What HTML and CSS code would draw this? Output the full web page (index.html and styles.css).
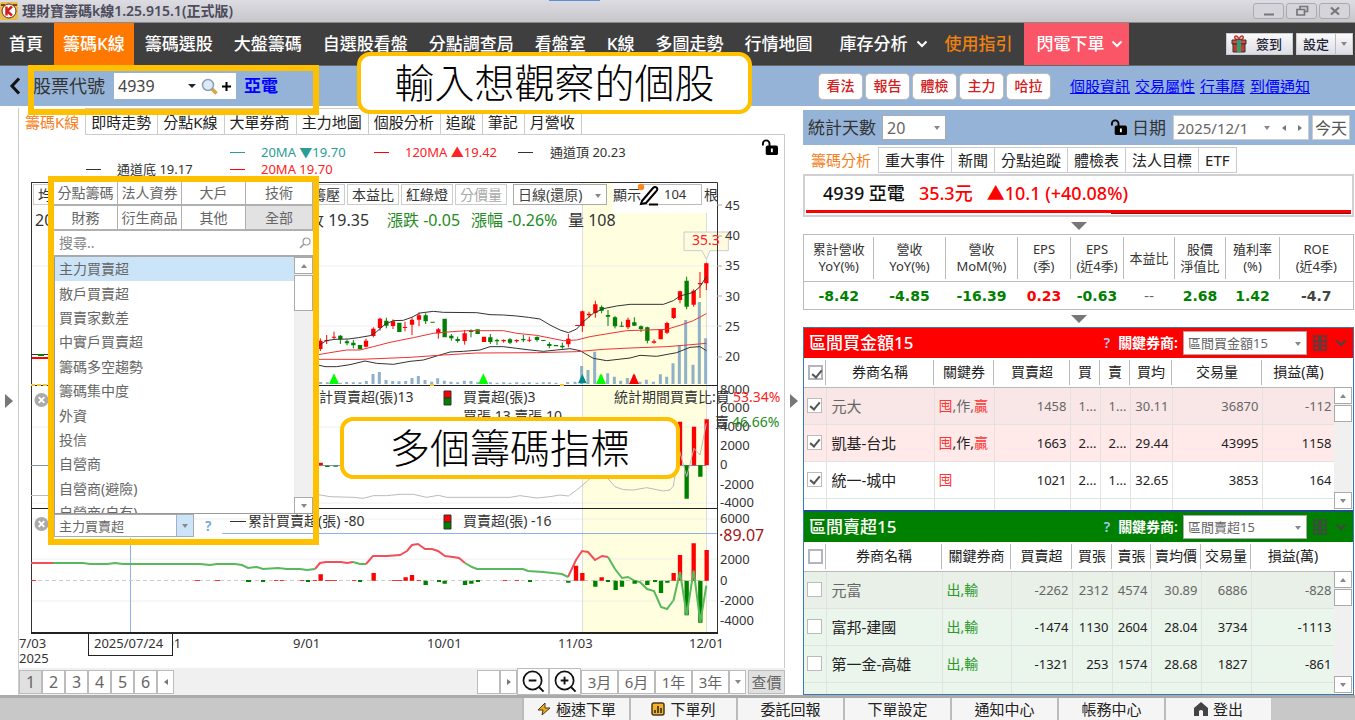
FILE: index.html
```html
<!DOCTYPE html>
<html lang="zh-Hant">
<head>
<meta charset="utf-8">
<meta name="viewport" content="width=device-width, initial-scale=1">
<title>理財寶籌碼k線</title>
<link rel="stylesheet" href="styles.css">
</head>
<body>
<svg class="defs" aria-hidden="true">
  <symbol id="lock" viewBox="0 0 18 18"><path d="M2 7V5a3.500 3.500 0 0 1 7 0v3" fill="none" stroke="#000" stroke-width="2"/><rect x="5" y="7" width="13" height="10" rx="2"/><path d="M11.500 10v4" stroke="#fff" stroke-width="2"/></symbol>
  <symbol id="chev" viewBox="0 0 12 8"><path d="M1.500 1.500 6 6l4.500-4.500" fill="none" stroke="currentColor" stroke-width="2"/></symbol>
  <symbol id="grid" viewBox="0 0 14 16"><path d="M1 1h5v14H1zM8 1h5v14H8zM1 6h5M1 10.500h5M8 6h5M8 10.500h5" fill="none" stroke="currentColor" stroke-width="1.500"/></symbol>
  <symbol id="close" viewBox="0 0 16 16"><circle cx="8" cy="8" r="7.500" fill="#aaa"/><path d="m5 5 6 6m0-6-6 6" stroke="#fff" stroke-width="2"/></symbol>
</svg>

<header class="titlebar">
  <svg class="app-icon" viewBox="0 0 18 18"><rect width="18" height="18" rx="2" fill="#e9bd4b"/><path d="M1 3h4M13 3h4" stroke="#7b4a14" stroke-width="2"/><circle cx="9" cy="9" r="7" fill="#fff" stroke="#6a2c12"/><path d="M6.500 4.500v9M12 4.500l-5 4.500 5 4.500" fill="none" stroke="#d21a1a" stroke-width="2.400"/></svg>
  <span class="title">理財寶籌碼k線1.25.915.1(正式版)</span>
  <span class="strip"></span>
  <div class="win-btns">
    <button aria-label="最小化"><svg viewBox="0 0 14 12"><path d="M2 9.500h10" stroke="#777" stroke-width="2"/></svg></button>
    <button aria-label="還原"><svg viewBox="0 0 14 12"><path d="M5 4V1.500h7.500v5H10M2 4.500h7.500v5.500H2z" fill="none" stroke="#777" stroke-width="1.700"/></svg></button>
    <button aria-label="關閉"><svg viewBox="0 0 14 12"><path d="m3 2.500 8 7m0-7-8 7" stroke="#777" stroke-width="2.200"/></svg></button>
  </div>
</header>

<nav class="nav">
  <a href="#">首頁</a><a href="#" class="active">籌碼K線</a><a href="#">籌碼選股</a><a href="#">大盤籌碼</a><a href="#">自選股看盤</a><a href="#">分點調查局</a><a href="#">看盤室</a><a href="#">K線</a><a href="#">多圖走勢</a><a href="#">行情地圖</a><a href="#" class="stock-menu">庫存分析<svg class="chev"><use href="#chev"/></svg></a><a href="#" class="guide">使用指引</a><a href="#" class="flash">閃電下單<svg class="chev"><use href="#chev"/></svg></a>
  <div class="nav-tools">
    <button class="tool"><svg class="gift" viewBox="0 0 16 18"><path d="M8 5C3 5 3 1 5 1s3 4 3 4 1-4 3-4 2 4-3 4" fill="none" stroke="#c33" stroke-width="1.600"/><path d="M1 5h14v4H1z" fill="#d84a3c" stroke="#333"/><path d="M2 9h12v8H2z" fill="#c43c30" stroke="#333"/><path d="M6 5h4v12H6z" fill="#2f9e73"/></svg>簽到</button>
    <button class="tool split"><span>設定</span><i class="tri"></i></button>
  </div>
</nav>

<section class="stockbar">
  <button class="back" aria-label="返回"><svg viewBox="0 0 12 18"><path d="M10 1.500 3 9l7 7.500" fill="none" stroke="#111" stroke-width="3"/></svg></button>
  <label for="code">股票代號</label>
  <div class="code-box">
    <input id="code" type="text" value="4939"><i class="tri dark"></i>
    <button aria-label="搜尋"><svg viewBox="0 0 17 17"><path d="m10.500 10.500 5 5" stroke="#d9a63f" stroke-width="3.500"/><circle cx="7" cy="7" r="5.500" fill="#dcebfa" stroke="#8fa0b4" stroke-width="1.500"/></svg></button>
    <button aria-label="新增"><svg viewBox="0 0 17 17"><path d="M8.500 4v9M4 8.500h9" stroke="#000" stroke-width="2"/></svg></button>
  </div>
  <a href="#" class="stock-name">亞電</a>
  <div class="quick">
    <button>看法</button><button>報告</button><button>體檢</button><button>主力</button><button>哈拉</button>
  </div>
  <div class="quick-links"><a href="#">個股資訊</a><a href="#">交易屬性</a><a href="#">行事曆</a><a href="#">到價通知</a></div>
</section>

<main class="main">
  <button class="gutter" aria-label="展開左側"><i></i></button>

  <section class="chart-pane">
    <div class="tabs left-tabs">
      <button class="on">籌碼K線</button><button>即時走勢</button><button>分點K線</button><button>大單券商</button><button>主力地圖</button><button>個股分析</button><button>追蹤</button><button>筆記</button><button>月營收</button>
    </div>
    <div class="chart-wrap">
      <svg class="chart" viewBox="19 135 765 533">
        <rect x="582" y="183" width="124" height="450" fill="#ffffe0"/>
        <path d="M31 266h686M31 326h686M31 427h686M31 503h686M31 519h686M31 559h686M31 601h686" stroke="#eee"/>
        <path d="M582.500 183v450M706.500 183v450" stroke="#ddd"/>
        <rect x="612" y="183" width="105" height="30" fill="#fff"/>

        <svg x="310" y="130" width="490" height="260" viewBox="0 0 1470 780">
          <path stroke="#8fb0c9" stroke-width="9" d="M32 762V756M52 762V757M91 762V758M110 762V756M130 762V757M150 762V757M169 762V753M189 762V732M208 762V726M228 762V750M248 762V753M267 762V754M287 762V753M306 762V744M325 762V738M345 762V750M365 762V755M383 762V745M403 762V752M423 762V755M443 762V757M463 762V752M483 762V753M503 762V757M541 762V757M561 762V758M581 762V757M600 762V758M620 762V757M640 762V758M658 762V757M681 762V758M700 762V757M718 762V757M738 762V758M773 762V756M795 762V755M815 762V708M834 762V720M854 762V665M873 762V735M893 762V730M913 762V740M932 762V752M952 762V744M972 762V735M990 762V755M1009 762V749M1030 762V755M1051 762V733M1070 762V740M1089 762V700M1108 762V645M1127 762V570M1149 762V704M1168 762V516M1187 762V625"/>
          <path stroke="red" stroke-width="3" d="M31 625V663M50 615V642M72 605V628M168 626V652M190 592V622M210 563V602M249 568V597M285 575V604M306 561V615M327 547V588M385 594V626M464 600V644M581 628V638M620 628V638M658 620V636M775 612V652M817 542V606M837 545V563M856 512V563M954 563V597M1032 628V641M1071 575V612M1091 533V567M1110 482V520M1151 478V530M1170 426V504M1189 398V480"/>
          <path stroke="red" stroke-width="13" d="M31 632V657M50 630V634M72 620V623M168 632V650M190 596V618M210 566V594M249 574V588M285 591V594M306 569V584M327 556V569M385 598V610M464 610V633M522 620V636M581 630V634M620 630V634M658 629V632M775 626V643M802 585V588M817 544V588M837 551V556M856 523V549M954 569V592M1032 634V638M1052 597V628M1071 579V608M1091 534V564M1110 484V510M1151 482V524M1170 459V463M1189 400V460"/>
          <path stroke="green" stroke-width="3" d="M91 615V642M111 628V646M130 630V655M229 563V595M347 550V582M424 612V632M443 620V638M483 598V622M541 612V642M561 626V645M600 624V642M640 615V636M681 619V635M718 636V655M757 638V656M875 526V550M894 540V588M915 558V595M935 575V590M973 562V588M993 586V606M1012 590V640M1130 440V538"/>
          <path stroke="green" stroke-width="13" d="M91 617V628M111 634V640M130 638V646M150 645V658M229 572V587M268 578V606M347 556V574M368 575V578M404 566V622M424 617V625M443 627V633M483 601V606M503 598V612M541 622V636M561 630V634M600 628V638M640 627V631M681 621V630M700 630V633M718 642V648M738 645V649M757 647V652M875 531V542M894 555V560M915 562V589M935 587V590M973 577V587M993 589V597M1012 592V632M1130 452V530"/>
          <g fill="none" stroke-width="3">
            <path stroke="#333" d="M25 648 48 632 75 628 115 627 145 623 180 617 200 605 225 583 250 572 280 571 305 562 330 549 370 544 400 547 500 548 540 554 580 555 620 558 655 562 690 567 720 585 750 600 775 608 800 597 820 575 850 550 880 536 920 528 960 523H1060L1090 512 1110 498 1150 487 1170 470 1189 440M25 705 45 710H80L120 704 165 693 200 700 250 703 300 694 340 690 380 678 420 666 460 664 510 660 540 650H580L620 655 660 660 700 664 740 660 780 656 810 662 850 685 890 692 960 684 990 676 1040 679 1100 668 1140 652 1170 650 1189 662"/>
            <path stroke="#e33" d="M25 674 60 668 110 660H150L190 650 240 637 310 623 370 610 400 607 470 602H580L620 610 680 616 720 624 760 632 800 630 840 620 900 610 950 602 1070 598 1110 586 1150 572 1189 551M25 688H150L300 682 400 675 500 669 680 668 800 665 880 658 960 654 1070 650 1120 646 1189 640"/>
          </g>
          <path fill="#0f0" d="m57 762 15-32 15 32zM505 762l15-32 15 32zM858 762l15-32 15 32z"/>
          <path fill="#008b8b" d="m804 760 13-28 13 28z"/><path fill="red" d="m957 762 15-32 15 32z"/>
          <path fill="#fffbe0" stroke="#ccc" stroke-width="3" d="M1122 306h133v56h-55l-11 26-13-26h-54z"/>
        </svg>

        <path d="M31 354.500h17" stroke="#333"/><path d="M31 358h17" stroke="red" stroke-width="2"/><path d="M38 355h6" stroke="green" stroke-width="2"/>
        <path d="M31 182.500h686.500V633M31.500 182v451" fill="none" stroke="#333"/>
        <path d="M31 385.500h686M31 508.500h686" stroke="#222"/><path d="M31 633h687" stroke="#222" stroke-width="2"/>
        <path d="M31 385h17M430 385h4M560 385h4" stroke="#f6c62e" stroke-width="2" stroke-dasharray="4 2"/>
        <path d="M717 205h5M717 236h5M717 266h5M717 296h5M717 326h5M717 357h5" stroke="#aaa"/>

        <path d="M31 465.500h675" stroke="#8292a8"/>
        <path d="M31 495.500h20" stroke="#bbb"/>
        <svg x="310" y="380" width="490" height="180" viewBox="0 0 1470 540">
          <path stroke="red" stroke-width="13" d="M32 248V256M1110 125V256M1152 140V256M1190 118V256"/>
          <path stroke="green" stroke-width="13" d="M52 257V261M77 257V260M1130 256V356M1171 256V290"/>
          <path fill="none" stroke="#bbb" stroke-width="3" d="M25 344 60 350 130 352 160 355 190 347H230L270 343H310L350 352 385 346 410 352H600L630 347 680 354 720 350 750 345 775 348 800 330 830 305 850 285 890 292 915 320 940 329 970 330 1010 323 1060 333 1080 330 1090 318 1108 210 1130 290 1152 205 1170 225 1189 130"/>
        </svg>

        <path d="M222 533.500h495M130.500 538v94" stroke="#8fb0e8"/>
        <path d="M31 580.500h675" stroke="#ccc" stroke-dasharray="4 3"/>
        <path d="M31 580.500h5M195 580.500h5M215 580.500h5M274 580.500h4M280 580.500h4M300 580.500h4M313 580.500h4M325 580.500h12M352 580.500h4M392 580.500h10M417 580.500h4M503 580.500h4M515 580.500h4" stroke="#f33"/>
        <path d="M246 581h5M261 581h4M306 581h4M358 581h4M437 581h4M476 581h4M528 581h4M606 581h4M653 581h4" stroke="green" stroke-width="2"/>
        <path fill="none" stroke="#f0505a" stroke-width="2" d="M31 563h22M315 569 320 563 326 562H341L347 563 353 562M366 564 373 556 387 556 400 555 407 551 412 545 418 544 425 549 432 549 438 551 445 556 453 557 459 558 465 563M568 577 576 560 582 551 588 552 595 560 602 556 608 557"/>
        <path fill="none" stroke="#58b85c" stroke-width="2" d="M53 563H83L90 564H107L115 563 123 564H200L210 565 217 564H235L242 565 248 568 257 567 263 569 278 568 287 569H300L307 570 315 569M353 562 360 564H366M465 563 472 567 477 569H523L528 571 543 572 562 574 568 577M608 557 615 569 622 578 628 577 635 581 640 582 647 589 654 591 661 607 667 609 673 601"/>
        <svg x="310" y="540" width="490" height="180" viewBox="0 0 1470 540">
          <path stroke="red" stroke-width="13" d="M32 122V103M191 122V99M287 122V112M306 122V105M798 122V77M817 122V99M875 122V112M1091 122V99M1110 122V45M1151 122V10M1190 122V30"/>
          <path stroke="green" stroke-width="13" d="M347 122V135M404 122V131M465 122V135M484 122V131M775 122V128M856 122V140M917 122V150M936 122V140M974 122V131M1012 122V135M1053 122V159M1072 122V128M1130 122V226M1171 122V248"/>
          <path fill="none" stroke="#58b85c" stroke-width="6" d="M1090 183 1110 96 1130 225 1151 92 1171 246 1189 137"/>
        </svg>

        <g stroke-width="1"><path d="M230 152.500h15" stroke="#2a9d95"/><path d="M374 152.500h15M230 169.500h15" stroke="red"/><path d="M518 152.500h15M86 169.500h15M230 521.500h16" stroke="#333"/></g>
        <g class="t13">
          <text x="261" y="157" class="teal">20MA ▼19.70</text><text x="405" y="157" class="red">120MA ▲19.42</text><text x="550" y="157">通道頂 20.23</text>
          <text x="117" y="174">通道底 19.17</text><text x="261" y="174" class="red">20MA 19.70</text>
        </g>
        <g class="t16">
          <text x="35" y="226">20</text><text x="308" y="226">收 19.35</text><text x="387" y="226" class="green">漲跌 -0.05</text><text x="471" y="226" class="green">漲幅 -0.26%</text><text x="568" y="226">量 108</text>
        </g>
        <g class="t13">
          <text x="725" y="210">45</text><text x="725" y="240">40</text><text x="725" y="270">35</text><text x="725" y="301">30</text><text x="725" y="331">25</text><text x="725" y="361">20</text>
          <text x="720" y="394">8000</text><text x="720" y="412">6000</text><text x="720" y="431">4000</text><text x="720" y="450">2000</text><text x="720" y="469">0</text><text x="720" y="489">-2000</text><text x="720" y="507">-4000</text>
          <text x="720" y="523">6000</text><text x="720" y="564">2000</text><text x="720" y="585">0</text><text x="720" y="605">-2000</text><text x="720" y="625">-4000</text>
          <text x="19" y="648">7/03</text><text x="19" y="663">2025</text><text x="154" y="648">8/01</text><text x="293" y="648">9/01</text><text x="427" y="648">10/01</text><text x="558" y="648">11/03</text><text x="689" y="648">12/01</text>
        </g>
        <g class="t14">
          <text x="319" y="402">計買賣超(張)13</text><text x="463" y="402">買賣超(張)3</text><text x="463" y="421">買張 13 賣張 10</text>
          <text x="614" y="402">統計期間買賣比:買</text><text x="733" y="402" class="red">53.34%</text><text x="715" y="427">賣</text><text x="732" y="427" class="green">46.66%</text>
          <text x="248" y="526">累計買賣超(張) -80</text><text x="463" y="526">買賣超(張) -16</text>
          <text x="692" y="245" class="red">35.3</text>
        </g>
        <text class="t16 dark-red" x="719" y="541">·89.07</text>
        <g stroke="#333"><path d="M444 391h7v7h-7z" fill="red"/><path d="M444 398h7v7h-7z" fill="green"/><path d="M444 515h7v7h-7z" fill="red"/><path d="M444 522h7v7h-7z" fill="green"/></g>
        <rect x="88.500" y="633.500" width="84" height="22" fill="#fff" stroke="#222"/>
        <text class="t13" x="94" y="648">2025/07/24</text>
        <use href="#close" x="34" y="392" width="15" height="16"/><use href="#close" x="34" y="516" width="15" height="16"/>
        <use href="#lock" x="761" y="139" width="17" height="17"/>
      </svg>

      <div class="chart-tools">
        <button class="ma">均線</button><button>籌壓</button><button>本益比</button><button>紅綠燈</button><button disabled>分價量</button>
        <span class="dd period"><select aria-label="週期"><option>日線(還原)</option></select></span>
        <label for="bars">顯示</label>
        <span class="bars-box"><input id="bars" type="text" value="104"><svg viewBox="0 0 22 24"><circle cx="4" cy="4" r="3.200" fill="#f78a1c"/><path d="m5 18 11-13q2-2 4 0 1 2-1 3.500L9 20l-5 1z" fill="#fff" stroke="#000" stroke-width="2"/><path d="M12 21.500h9" stroke="#000" stroke-width="2"/></svg></span>
        <span>根</span>
      </div>

      <aside class="picker">
        <div class="cats"><button>分點籌碼</button><button>法人資券</button><button>大戶</button><button>技術</button><button>財務</button><button>衍生商品</button><button>其他</button><button class="on">全部</button></div>
        <div class="search"><input type="text" placeholder="搜尋.." aria-label="搜尋指標"><svg viewBox="0 0 12 12"><circle cx="7.500" cy="4.500" r="3.500" fill="none" stroke="#999" stroke-width="1.200"/><path d="M5 7 1 11" stroke="#999" stroke-width="1.600"/></svg></div>
        <div class="list-row">
          <ul><li class="on">主力買賣超</li><li>散戶買賣超</li><li>買賣家數差</li><li>中實戶買賣超</li><li>籌碼多空趨勢</li><li>籌碼集中度</li><li>外資</li><li>投信</li><li>自營商</li><li>自營商(避險)</li><li>自營商(自有)</li></ul>
          <div class="scroll long"><button aria-label="向上"><i class="tri up"></i></button><span class="thumb"></span><button class="down" aria-label="向下"><i class="tri"></i></button></div>
        </div>
        <div class="picked"><span class="dd"><select aria-label="指標"><option>主力買賣超</option></select></span><a href="#">?</a></div>
      </aside>
    </div>
    <div class="pager">
      <button class="on">1</button><button>2</button><button>3</button><button>4</button><button>5</button><button>6</button><button class="thin" aria-label="向左"><i class="tri lt"></i></button>
      <span class="track"></span>
      <button aria-label="捲軸"></button><button class="thin" aria-label="向右"><i class="tri rt"></i></button>
      <button class="zoom" aria-label="縮小"><svg viewBox="0 0 24 24"><circle cx="11" cy="11" r="9.500" fill="none" stroke="#111" stroke-width="1.800"/><path d="m18 18 4.500 4.500M7 11h8" stroke="#111" stroke-width="2"/></svg></button><button class="zoom" aria-label="放大"><svg viewBox="0 0 24 24"><circle cx="11" cy="11" r="9.500" fill="none" stroke="#111" stroke-width="1.800"/><path d="m18 18 4.500 4.500M7 11h8M11 7v8" stroke="#111" stroke-width="2"/></svg></button>
      <button class="range">3月</button><button class="range">6月</button><button class="range">1年</button><button class="range">3年</button><button class="thin" aria-label="更多"><i class="tri"></i></button><button class="range on">查價</button>
    </div>
  </section>

  <button class="gutter" aria-label="展開右側"><i></i></button>

  <section class="info-pane">
    <div class="days">
      <label for="days">統計天數</label><span class="dd num"><select id="days"><option>20</option></select></span>
      <svg class="lock"><use href="#lock"/></svg><label for="date">日期</label>
      <div class="date-box"><input id="date" type="text" value="2025/12/1"><i class="tri"></i><i class="tri lt"></i><i class="tri rt"></i></div>
      <button>今天</button>
    </div>
    <div class="tabs right-tabs"><button class="on">籌碼分析</button><button>重大事件</button><button>新聞</button><button>分點追蹤</button><button>體檢表</button><button>法人目標</button><button>ETF</button></div>
    <div class="price"><p><b>4939 亞電</b><span>35.3元</span><span>▲10.1 (+40.08%)</span></p><div class="rule"><i></i></div></div>
    <button class="fold" aria-label="收合"><i></i></button>
    <table class="metrics">
      <colgroup><col class="m70"><col class="m72"><col class="m72"><col class="m53"><col class="m53"><col class="m51"><col class="m51"><col class="m54"><col class="m74"></colgroup>
      <thead><tr><th>累計營收<br>YoY(%)</th><th>營收<br>YoY(%)</th><th>營收<br>MoM(%)</th><th>EPS<br>(季)</th><th>EPS<br>(近4季)</th><th>本益比</th><th>股價<br>淨值比</th><th>殖利率<br>(%)</th><th>ROE<br>(近4季)</th></tr></thead>
      <tbody><tr><td>-8.42</td><td>-4.85</td><td>-16.39</td><td class="up">0.23</td><td>-0.63</td><td class="nil">--</td><td>2.68</td><td>1.42</td><td class="flat">-4.7</td></tr></tbody>
    </table>
    <button class="fold" aria-label="收合"><i></i></button>
    <div class="brokers">
      <div class="bhead buy"><h2>區間買金額15</h2><a href="#">?</a><label for="k1">關鍵券商:</label><span class="dd"><select id="k1"><option>區間買金額15</option></select></span><svg class="grid"><use href="#grid"/></svg><svg class="chev"><use href="#chev"/></svg></div>
      <div class="bbody">
        <div class="clip"><table class="btable t-buy">
          <colgroup><col class="c22"><col class="c108"><col class="c60"><col class="c76"><col class="c30"><col class="c30"><col class="c42"><col class="c90"><col class="c73"></colgroup>
          <thead><tr><th><input type="checkbox" class="all" checked aria-label="全選"></th><th>券商名稱</th><th>關鍵券</th><th>買賣超</th><th>買</th><th>賣</th><th>買均</th><th>交易量</th><th>損益(萬)</th></tr></thead>
          <tbody>
            <tr class="hot dim"><td><input type="checkbox" checked aria-label="元大"></td><td>元大</td><td><em>囤</em>,作,<em>贏</em></td><td>1458</td><td>1...</td><td>1...</td><td>30.11</td><td>36870</td><td>-112</td></tr>
            <tr class="hot"><td><input type="checkbox" checked aria-label="凱基-台北"></td><td>凱基-台北</td><td><em>囤</em>,作,<em>贏</em></td><td>1663</td><td>2...</td><td>2...</td><td>29.44</td><td>43995</td><td>1158</td></tr>
            <tr><td><input type="checkbox" checked aria-label="統一-城中"></td><td>統一-城中</td><td><em>囤</em></td><td>1021</td><td>2...</td><td>1...</td><td>32.65</td><td>3853</td><td>164</td></tr>
            <tr><td></td><td></td><td></td><td></td><td></td><td></td><td></td><td></td><td></td></tr>
          </tbody></table></div>
        <div class="scroll"><button aria-label="向上"><i class="tri up"></i></button><span class="thumb"></span><button class="down" aria-label="向下"><i class="tri"></i></button></div>
      </div>
      <div class="bhead sell"><h2>區間賣超15</h2><a href="#">?</a><label for="k2">關鍵券商:</label><span class="dd"><select id="k2"><option>區間賣超15</option></select></span><svg class="grid"><use href="#grid"/></svg><svg class="chev"><use href="#chev"/></svg></div>
      <div class="bbody">
        <div class="clip"><table class="btable t-sell">
          <colgroup><col class="c22"><col class="c116"><col class="c69"><col class="c61"><col class="c40"><col class="c39"><col class="c50"><col class="c50"><col class="c84"></colgroup>
          <thead><tr><th><input type="checkbox" class="all" aria-label="全選"></th><th>券商名稱</th><th>關鍵券商</th><th>買賣超</th><th>買張</th><th>賣張</th><th>賣均價</th><th>交易量</th><th>損益(萬)</th></tr></thead>
          <tbody>
            <tr class="dim"><td><input type="checkbox" aria-label="元富"></td><td>元富</td><td><em>出,輸</em></td><td>-2262</td><td>2312</td><td>4574</td><td>30.89</td><td>6886</td><td>-828</td></tr>
            <tr><td><input type="checkbox" aria-label="富邦-建國"></td><td>富邦-建國</td><td><em>出,輸</em></td><td>-1474</td><td>1130</td><td>2604</td><td>28.04</td><td>3734</td><td>-1113</td></tr>
            <tr><td><input type="checkbox" aria-label="第一金-高雄"></td><td>第一金-高雄</td><td><em>出,輸</em></td><td>-1321</td><td>253</td><td>1574</td><td>28.68</td><td>1827</td><td>-861</td></tr>
            <tr><td></td><td></td><td></td><td></td><td></td><td></td><td></td><td></td><td></td></tr>
          </tbody></table></div>
        <div class="scroll"><button aria-label="向上"><i class="tri up"></i></button><span class="thumb"></span><button class="down" aria-label="向下"><i class="tri"></i></button></div>
      </div>
    </div>
  </section>
</main>

<footer class="statusbar">
  <button><svg viewBox="0 0 14 14"><path d="M8 1 1 8h5l-1 5 8-7H8z" fill="#f2a81d" stroke="#4a3a1a"/></svg>極速下單</button><button><svg viewBox="0 0 14 14"><rect x="1" y="1" width="12" height="12" rx="2" fill="#f2b32a" stroke="#4a3a1a" stroke-width="1.500"/><path d="M4 11V8M7 11V4M10 11V6" stroke="#4a3a1a" stroke-width="1.800"/></svg>下單列</button><button>委託回報</button><button>下單設定</button><button>通知中心</button><button>帳務中心</button><button><svg viewBox="0 0 14 14"><path d="M7 0 0 6v8h5V9q2-2 4 0v5h5V6z" fill="#444"/></svg>登出</button>
</footer>

<div class="mark mark-code"></div>
<div class="mark mark-picker"></div>
<div class="callout callout-code">輸入想觀察的個股</div>
<div class="callout callout-picker">多個籌碼指標</div>
</body>
</html>
```
FILE: styles.css
```css
* { box-sizing: border-box; }
body { margin: 0; min-height: 100vh; display: flex; flex-direction: column; position: relative; background: #fff; color: #333; font: 14px/18px "Noto Sans", "Noto Sans CJK TC", sans-serif; }
button, input, select { font: inherit; color: inherit; margin: 0; padding: 0; border: 0; background: none; border-radius: 0; min-width: 0; }
a { color: inherit; text-decoration: none; }
p, h2, ul { margin: 0; padding: 0; list-style: none; }
.defs { position: absolute; width: 0; height: 0; }

/* small triangles */
.tri { flex: none; width: 0; height: 0; border: 3px solid transparent; border-top: 4px solid #888; border-bottom: 0; }
.tri.dark { border-top-color: #223; }
.tri.up { border-top: 0; border-bottom: 4px solid #888; }
.tri.lt { border: 3px solid transparent; border-right: 4px solid #777; border-left: 0; }
.tri.rt { border: 3px solid transparent; border-left: 4px solid #777; border-right: 0; }
.chev { width: 12px; height: 8px; }

/* drop-downs */
.dd { position: relative; display: flex; background: #fff; border: 1px solid #ababab; color: #666; }
.dd select { appearance: none; width: 100%; padding: 0 16px 0 4px; outline: 0; }
.dd::after { content: ""; position: absolute; right: 5px; top: 45%; border: 3px solid transparent; border-top: 4px solid #888; border-bottom: 0; pointer-events: none; }

.titlebar { height: 23px; display: flex; align-items: center; position: relative; background: linear-gradient(#dcdce2, #c6c6cb); border-bottom: 1px solid #8a8a8e; }
.app-icon { width: 18px; height: 18px; }
.title { margin-left: 4px; font-size: 14px; font-weight: 600; color: #4c4c5c; }
.strip { position: absolute; left: 549px; top: 0; width: 51px; height: 1px; background: #5b8fd8; }
.win-btns { margin-left: auto; margin-right: 5px; display: flex; gap: 2px; }
.win-btns button { width: 31px; height: 16px; border: 1px solid #aaaab0; border-radius: 3px; background: #d4d4da; display: grid; place-items: center; }
.win-btns svg { width: 14px; height: 12px; }

.nav { height: 43px; display: flex; align-items: stretch; background: #3f3f3f; color: #fff; font-size: 17px; font-weight: 500; border-bottom: 1px solid #666; }
.nav > a { display: flex; align-items: center; padding: 0 11px 0 10px; white-space: nowrap; }
.nav > a:first-child { padding-left: 9px; }
.nav .active { background: #ff7800; padding: 0 9px; margin-right: 1px; }
.nav .stock-menu { padding: 0 7px 0 16px; gap: 8px; }
.nav .guide { color: #f08010; }
.nav .flash { background: #fb5667; padding: 0 6px 0 13px; gap: 6px; }
.nav-tools { margin-left: auto; margin-right: 2px; display: flex; align-items: center; gap: 3px; font-size: 13px; color: #223; }
.tool { height: 22px; display: flex; align-items: center; background: linear-gradient(#fafafc, #dcdce4); border: 1px solid #ccc; padding: 0 10px 0 4px; }
.gift { width: 16px; height: 18px; margin-right: 9px; }
.tool.split { padding: 0; }
.split span { padding: 0 6px; border-right: 1px solid #bbb; line-height: 20px; }
.split .tri { margin: 0 5px; }

.stockbar { height: 40px; display: flex; align-items: center; background: #95b3d7; }
.back { width: 33px; padding-left: 9px; display: flex; }
.back svg { width: 12px; height: 18px; }
.stockbar label { font-size: 18px; width: 81px; white-space: nowrap; }
.code-box { width: 122px; height: 26px; display: flex; align-items: center; background: #fff; padding-right: 1px; }
.code-box input { flex: 1; padding-left: 4px; font-size: 16px; color: #444; line-height: 24px; }
.code-box .tri { border-width: 4px 4px 0; margin-right: 5px; }
.code-box button, .code-box svg { width: 17px; height: 17px; display: block; }
.stock-name { margin-left: 8px; font-size: 17px; font-weight: 700; color: #00f; }
.quick { margin-left: auto; display: flex; gap: 2px; }
.quick button { width: 45px; height: 27px; font-size: 14px; font-weight: 500; color: #d02020; background: #fff; border: 1px solid #bbb; border-radius: 5px; }
.quick-links { display: flex; gap: 5px; margin-left: 19px; margin-right: 45px; font-size: 15px; color: #00f; }
.quick-links a { text-decoration: underline; }

.main { flex: 1; display: grid; grid-template-columns: 18px minmax(0, 767fr) 18px minmax(0, 552fr); }
.gutter { display: grid; place-items: center; cursor: pointer; }
.gutter i { border: 7px solid transparent; border-left: 8px solid #777; border-right: 0; }

.tabs { display: flex; }
.tabs button { padding: 0 5px; border: 1px solid #ccc; border-left: 0; background: #fff; font-size: 15px; color: #222; white-space: nowrap; line-height: 24px; }
.tabs .on { color: #f5821f; border: 0; }
.left-tabs { height: 29px; padding-top: 2px; border-bottom: 1px solid #ccc; }
.left-tabs button { padding: 0 6px 0 5px; border-bottom: 0; }
.left-tabs .on { padding: 0 6px; border-left: 1px solid #ccc; border-right: 1px solid #ccc; background: #fff; margin-bottom: -1px; }

.chart-wrap { position: relative; border: solid #ccc; border-width: 0 1px; }
.chart { display: block; width: 100%; height: auto; overflow: hidden; }
.chart text { fill: #333; }
.chart .red { fill: #f22; }
.chart .teal { fill: #2a9d95; }
.chart .green { fill: #228b22; }
.chart .dark-red { fill: #a01414; }
.t13 { font-size: 13px; }
.t14 { font-size: 14px; }
.t16 { font-size: 16px; }

.chart-tools { position: absolute; left: 14px; top: 49px; display: flex; align-items: center; gap: 2px; font-size: 14px; color: #333; white-space: nowrap; }
.chart-tools button { height: 21px; padding: 0 4px; border: 1px solid #ccc; background: #fff; }
.chart-tools button:disabled { color: #aaa; }
.chart-tools .ma { margin-right: 234px; }
.period { width: 94px; height: 21px; margin-left: 4px; margin-right: 4px; color: #444; }
.bars-box { position: relative; width: 59px; height: 21px; border: 1px solid #bbb; border-left: 0; background: #fff; }
.bars-box input { width: 100%; padding-left: 21px; font-size: 13px; line-height: 19px; }
.bars-box svg { position: absolute; left: -6px; top: -2px; width: 22px; height: 24px; }

.picker { position: absolute; left: 35px; top: 47px; width: 259px; color: #666; }
.cats { display: grid; grid-template-columns: 64px 64px 64px 1fr; background: #fff; }
.cats button { height: 25px; border: solid #b0b0b0; border-width: 0 1px 2px 0; white-space: nowrap; }
.cats button:nth-child(-n+4) { height: 24px; }
.cats .on { background: #e2e2e2; }
.search { display: flex; align-items: center; height: 26px; background: #fff; border-bottom: 2px solid #aaa; padding: 0 2px 0 5px; }
.search input { flex: 1; }
.search input::placeholder { color: #888; }
.search svg { width: 12px; height: 12px; }
.list-row { display: grid; grid-template-columns: 1fr 19px; height: 257px; background: #fff; border: solid #999; border-width: 0 0 1px 1px; overflow: hidden; }
.list-row ul { display: grid; grid-auto-rows: 9.5%; height: 257px; overflow: hidden; }
.list-row li { padding-left: 4px; display: flex; align-items: center; }
.list-row .on { background: #cce4f7; }
.picked { display: flex; align-items: center; gap: 11px; }
.picked .dd { width: 140px; height: 23px; }
.picked .dd::before { content: ""; position: absolute; right: 0; top: 0; bottom: 0; width: 16px; background: #cce4f7; border-left: 1px solid #aac; }
.picked select { font-size: 13px; position: relative; }
.picked .dd::after { z-index: 1; }
.picked a { color: #6aa5dc; font-weight: 600; }

.scroll { display: flex; flex-direction: column; background: #f0f0f0; }
.scroll button { height: 17px; display: grid; place-items: center; background: #fff; border: 1px solid #aaa; flex: none; }
.scroll .thumb { height: 17px; margin-top: 1px; background: #fff; border: 1px solid #aaa; }
.scroll.long .thumb { height: 36px; }
.scroll .down { margin-top: auto; }

.pager { display: flex; align-items: center; height: 27px; background: #f0f0f0; border-left: 1px solid #ccc; }
.pager button { width: 23px; height: 24px; display: grid; place-items: center; background: #fff; border: 1px solid #bbb; font-size: 16px; color: #666; }
.pager .on { background: #e0e0e0; }
.pager .thin { width: 17px; }
.pager .track { flex: 1; }
.pager .zoom { width: 32px; height: 27px; }
.pager .zoom svg { width: 23px; height: 23px; }
.pager .range { width: 37px; font-size: 15px; white-space: nowrap; }
.pager .range.on { margin-left: 2px; }

.info-pane { display: flex; flex-direction: column; padding: 4px 1px 0 0; }
.days { height: 35px; display: flex; align-items: center; background: #95b3d7; padding: 0 5px; margin-right: -1px; font-size: 17px; }
.days label { white-space: nowrap; }
.dd.num { width: 64px; height: 25px; margin-left: 6px; font-size: 16px; }
.days .lock { width: 17px; height: 17px; margin-left: auto; margin-right: 5px; }
.date-box { width: 136px; height: 25px; margin: 0 3px 0 7px; display: flex; align-items: center; gap: 12px; padding: 0 6px 0 3px; background: #fff; border: 1px solid #ccc; color: #666; }
.date-box input { flex: 1; font-size: 15px; line-height: 22px; }
.days button { height: 25px; width: 38px; background: #fff; border: 1px solid #ccc; color: #555; white-space: nowrap; font-size: 16px; }
.right-tabs { padding-top: 2px; }
.right-tabs button { padding: 0 6px; }
.right-tabs .on { padding: 0 7px 0 8px; border-right: 1px solid #ccc; }
.price { margin-top: 1px; border: 2px solid #d0d0d4; padding: 0 1px 1px; }
.price p { display: flex; gap: 14px; padding-left: 17px; font-size: 18px; line-height: 34px; font-weight: 500; color: #f00; }
.price b { color: #111; font-weight: 500; }
.rule { height: 4px; border-top: 3px solid #f00; display: flex; }
.rule i { margin-left: auto; width: 44%; background: #811; }
.fold { height: 17px; display: grid; place-items: center; }
.fold i { border: 8px solid transparent; border-top: 8px solid #777; border-bottom: 0; }

.metrics { width: 100%; table-layout: fixed; border-collapse: collapse; border: 1px solid #bbb; }
.m70 { width: 70px; } .m72 { width: 72px; } .m53 { width: 53px; } .m51 { width: 51px; } .m54 { width: 54px; } .m74 { width: 74px; }
.metrics th { height: 47px; padding: 0; font-size: 13px; line-height: 17px; font-weight: 400; white-space: nowrap; border-bottom: 1px solid #bbb; background: linear-gradient(#bbb, #bbb) right center / 1px 42px no-repeat; }
.metrics th:last-child { background: none; }
.metrics td { height: 28px; padding: 0; text-align: center; font: bold 14px/18px "DejaVu Sans", sans-serif; color: #008000; }
.metrics .up { color: #f00; }
.metrics .flat { color: #444; }
.metrics .nil { color: #666; font-weight: 400; }

.brokers { border: 1px solid #3a78b0; flex: 1; display: flex; flex-direction: column; }
.bhead { height: 30px; display: flex; align-items: center; color: #fff; padding: 0 6px 0 5px; flex: none; }
.bhead h2 { font-size: 17px; font-weight: 500; margin-right: auto; }
.bhead a { color: #a8c8f0; font-weight: 600; margin-right: 8px; }
.bhead label { margin-right: 5px; font-weight: 600; }
.bhead .dd { width: 124px; height: 24px; font-size: 13px; }
.bhead .grid { width: 14px; height: 16px; margin: 0 8px 0 6px; }
.bhead svg { color: #444; }
.buy { background: #f00; }
.sell { background: #008000; border-top: 2px solid #1a4f8a; height: 32px; }
.bbody { display: grid; grid-template-columns: minmax(0, 1fr) 19px; height: 152px; }
.clip { overflow: hidden; height: 152px; }
.bbody .scroll { margin: 29px 1px 1px 0; }
.btable { width: 100%; table-layout: fixed; border-collapse: collapse; }
.c22 { width: 22px; } .c30 { width: 30px; } .c39 { width: 39px; } .c40 { width: 40px; } .c42 { width: 42px; } .c50 { width: 50px; } .c60 { width: 60px; } .c61 { width: 61px; } .c69 { width: 69px; } .c73 { width: 73px; } .c76 { width: 76px; } .c84 { width: 84px; } .c90 { width: 90px; } .c108 { width: 108px; } .c116 { width: 116px; }
.btable th { height: 29px; padding: 0; font-size: 14px; font-weight: 400; color: #222; white-space: nowrap; border-bottom: 1px solid #bbb; background: linear-gradient(#bbb, #bbb) right center / 1px 25px no-repeat; }
.btable td { height: 37px; padding: 0 3px; text-align: right; font-size: 13px; border: solid #e2e2e2; border-width: 0 1px 1px 0; white-space: nowrap; color: #222; }
.btable td:nth-child(2) { text-align: left; font-size: 15px; padding-left: 5px; }
.btable td:nth-child(3) { text-align: left; font-size: 14px; padding-left: 4px; }
.btable td:first-child { padding: 0; text-align: center; }
.btable em { font-style: normal; color: #f33; }
.btable .dim td { color: #666; }
.hot { background: #ffe9e9; }
.hot.dim { background: #f9e7e7; }
.t-sell tbody { background: #eaf5ec; }
.t-sell .dim { background: #e8f0e8; }
.t-sell em { color: #2a9a2a; }
.btable input { appearance: none; width: 15px; height: 15px; display: block; margin: 0 auto; background: #fff; border: 1px solid #bbb; position: relative; }
.btable input.all { border: 2px solid #b4b4c0; }
.btable input:checked::after { content: ""; position: absolute; left: 4px; top: 1px; width: 4px; height: 8px; border: solid #555; border-width: 0 2px 2px 0; transform: rotate(40deg); }

.statusbar { height: 25px; display: flex; justify-content: flex-end; padding-right: 84px; background: #c8c8c8; border-top: 3px solid #aaa; }
.statusbar button { width: 107px; display: flex; align-items: center; justify-content: center; gap: 5px; background: #f5f5f5; border-left: 2px solid #bbb; font-size: 15px; color: #222; }
.statusbar svg { width: 14px; height: 14px; }

/* tutorial marks laid over the window */
.mark { position: absolute; border: 6px solid #ffc000; pointer-events: none; }
.mark-code { left: 28px; top: 65px; width: 291px; height: 50px; }
.mark-picker { left: 48px; top: 176px; width: 271px; height: 369px; }
.callout { position: absolute; display: grid; place-items: center; border: 4px solid #ffc000; border-radius: 13px; background: #fff; color: #000; font-size: 40px; line-height: 54px; font-weight: 300; white-space: nowrap; }
.callout-code { left: 357px; top: 52px; width: 395px; }
.callout-picker { left: 340px; top: 417px; width: 340px; }
```
